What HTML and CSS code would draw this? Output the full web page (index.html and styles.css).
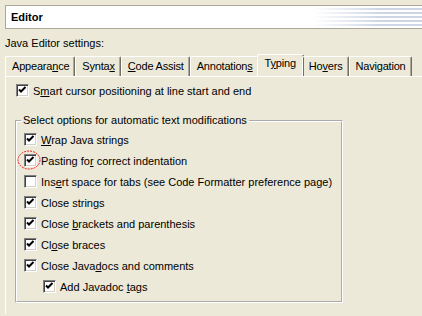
FILE: index.html
```html
<!DOCTYPE html>
<html lang="en">
<head>
    <meta charset="UTF-8">
    <title>Editor</title>
    <link rel="stylesheet" href="styles.css">
</head>
<body>
    <div class="title-bar">Editor</div>
    <div class="settings-label">Java Editor settings:</div>

    <div class="tabs">
        <div class="tab">Appeara<u>n</u>ce</div>
        <div class="tab">Synta<u>x</u></div>
        <div class="tab"><u>C</u>ode Assist</div>
        <div class="tab">Annotation<u>s</u></div>
        <div class="tab active">T<u>y</u>ping</div>
        <div class="tab">Ho<u>v</u>ers</div>
        <div class="tab">Navi<u>g</u>ation</div>
    </div>

    <div class="panel">
        <div class="option">
            <span class="check"><svg width="13" height="13"><polyline points="3,5.5 5,7.5 9.5,3" /></svg></span>
            <span>S<u>m</u>art cursor positioning at line start and end</span>
        </div>

        <fieldset class="group">
            <legend>Select options for automatic text modifications</legend>
            <div class="option">
                <span class="check"><svg width="13" height="13"><polyline points="3,5.5 5,7.5 9.5,3" /></svg></span>
                <span><u>W</u>rap Java strings</span>
            </div>
            <div class="option">
                <span class="check">
                    <svg width="13" height="13"><polyline points="3,5.5 5,7.5 9.5,3" /></svg>
                    <!-- red marker drawn over the checkbox -->
                    <svg class="marker" width="24" height="20"><ellipse cx="12" cy="10" rx="11" ry="9" /></svg>
                </span>
                <span>Pasting fo<u>r</u> correct indentation</span>
            </div>
            <div class="option">
                <span class="check"></span>
                <span>Ins<u>e</u>rt space for tabs (see Code Formatter preference page)</span>
            </div>
            <div class="option">
                <span class="check"><svg width="13" height="13"><polyline points="3,5.5 5,7.5 9.5,3" /></svg></span>
                <span>Close strin<u>g</u>s</span>
            </div>
            <div class="option">
                <span class="check"><svg width="13" height="13"><polyline points="3,5.5 5,7.5 9.5,3" /></svg></span>
                <span>Close <u>b</u>rackets and parenthesis</span>
            </div>
            <div class="option">
                <span class="check"><svg width="13" height="13"><polyline points="3,5.5 5,7.5 9.5,3" /></svg></span>
                <span>Cl<u>o</u>se braces</span>
            </div>
            <div class="option">
                <span class="check"><svg width="13" height="13"><polyline points="3,5.5 5,7.5 9.5,3" /></svg></span>
                <span>Close Java<u>d</u>ocs and comments</span>
            </div>
            <div class="option sub">
                <span class="check"><svg width="13" height="13"><polyline points="3,5.5 5,7.5 9.5,3" /></svg></span>
                <span>Add Javadoc <u>t</u>ags</span>
            </div>
        </fieldset>
    </div>
</body>
</html>
```

FILE: styles.css
```css
body {
    margin: 0;
    height: 316px;
    background-color: #ece9d8;
    font-family: "Liberation Sans", Arial, sans-serif;
    font-size: 11px;
    color: #000;
    overflow: hidden;
}
u {
    text-decoration: underline;
    text-underline-offset: 1px;
}
.title-bar {
    margin: 5px 0 0 5px;
    height: 22px;
    line-height: 22px;
    padding-left: 5px;
    border: 1px solid #aca899;
    border-right: none;
    font-weight: bold;
    background-color: #fff;
    background-image:
        linear-gradient(to right, #fff 74%, rgba(255,255,255,0) 90%),
        repeating-linear-gradient(to bottom, #fff 0, #fff 2px, #cdd5e6 2px, #cdd5e6 4px);
}
.settings-label {
    margin: 8px 0 0 5px;
    line-height: 13px;
}
.tabs {
    display: flex;
    align-items: flex-end;
    height: 22px;
    margin: 4px 0 0 5px;
    position: relative;
    z-index: 1;
}
.tab {
    flex-shrink: 0;
    white-space: nowrap;
    height: 19px;
    line-height: 19px;
    padding: 0 5px 0 6px;
    letter-spacing: -0.2px;
    border-top: 1px solid #fff;
    border-left: 1px solid #fff;
    border-right: 1px solid #716f64;
    box-shadow: inset -1px 0 0 #aca899;
    border-radius: 2px 2px 0 0;
}
.tab.active {
    height: 21px;
    line-height: 17px;
    margin: 0 -2px;
    padding: 0 7px;
    background-color: #ece9d8;
}
.panel {
    margin-left: 5px;
    border-top: 1px solid #fff;
    border-left: 1px solid #fff;
    padding: 7px 0 0 10px;
    height: 230px;
}
.option {
    display: flex;
    align-items: center;
    height: 21px;
    gap: 4px;
    white-space: nowrap;
}
.panel > .option {
    height: 13px;
}
.check {
    position: relative;
    width: 11px;
    height: 11px;
    background-color: #fff;
    border: 1px solid;
    border-color: #808080 #fff #fff #808080;
    box-shadow: inset 1px 1px 0 #404040, inset -1px -1px 0 #d4d0c8;
    flex-shrink: 0;
}
.check svg {
    position: absolute;
    left: -1px;
    top: -1px;
}
.check polyline {
    fill: none;
    stroke: #000;
    stroke-width: 2;
}
.check .marker {
    left: -8px;
    top: -5px;
}
.marker ellipse {
    fill: none;
    stroke: #e8201a;
    stroke-width: 1;
    stroke-dasharray: 2 1;
}
.group {
    margin: 17px 0 0 -1px;
    width: 317px;
    padding: 2px 0 4px 7px;
    border: 2px groove #fff;
}
.group legend {
    padding: 0 2px;
    margin-left: -3px;
    line-height: 13px;
}
.option.sub {
    padding-left: 19px;
}
```
